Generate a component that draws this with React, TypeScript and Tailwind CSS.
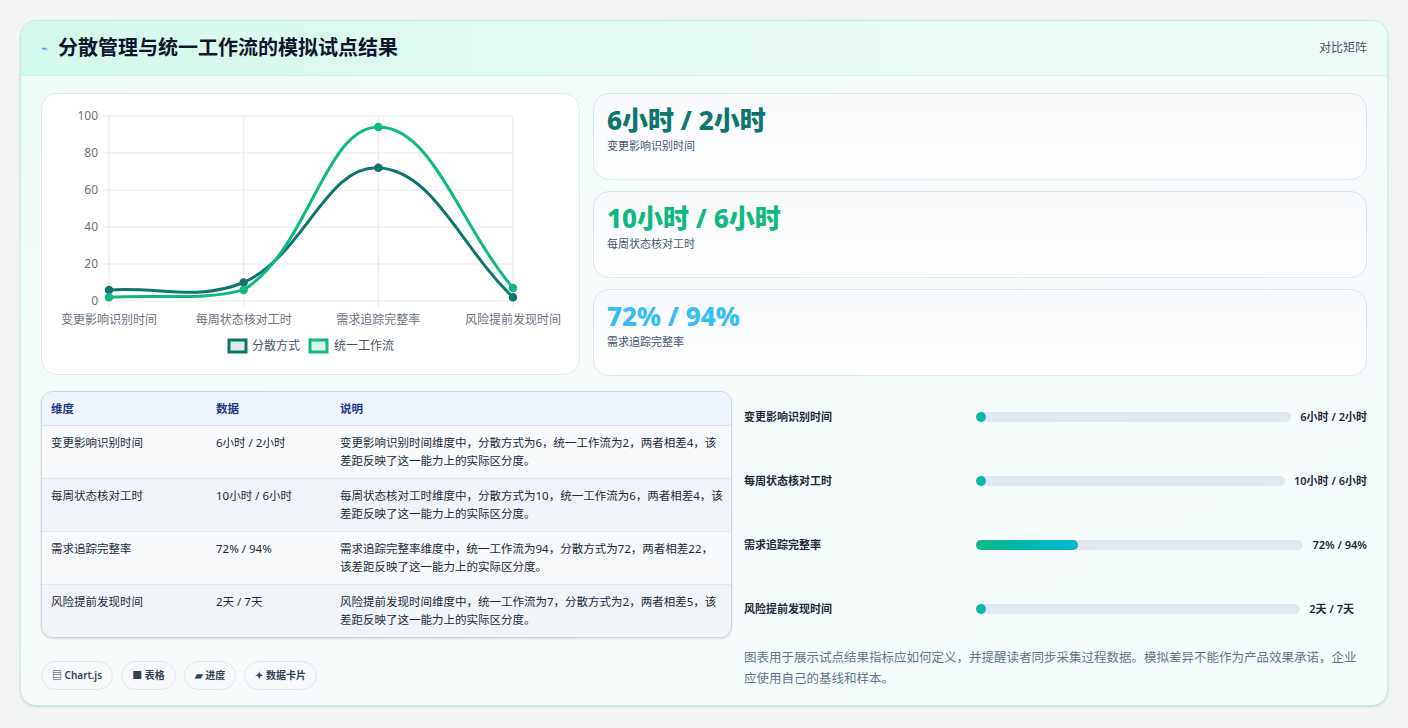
import React from "react";

const cats = ["变更影响识别时间", "每周状态核对工时", "需求追踪完整率", "风险提前发现时间"];
const seriesA = [6, 10, 72, 2];
const seriesB = [2, 6, 94, 7];

const X0 = 67;
const X1 = 471;
const Y0 = 207;
const Y1 = 22;

function pts(vals: number[]) {
  return vals.map((v, i) => ({
    x: X0 + ((X1 - X0) / 3) * i,
    y: Y0 - ((Y0 - Y1) * v) / 100,
  }));
}

// chart.js style spline (tension 0.4)
function curve(vals: number[]) {
  const p = pts(vals);
  const t = 0.4;
  const cps = p.map((cur, i) => {
    const prev = p[i - 1] || cur;
    const next = p[i + 1] || cur;
    const d01 = Math.hypot(cur.x - prev.x, cur.y - prev.y);
    const d12 = Math.hypot(next.x - cur.x, next.y - cur.y);
    const s01 = d01 / (d01 + d12 || 1);
    const s12 = d12 / (d01 + d12 || 1);
    const fa = t * s01;
    const fb = t * s12;
    return {
      prev: { x: cur.x - fa * (next.x - prev.x), y: Math.min(Y0, cur.y - fa * (next.y - prev.y)) },
      next: { x: cur.x + fb * (next.x - prev.x), y: Math.min(Y0, cur.y + fb * (next.y - prev.y)) },
    };
  });
  let d = `M${p[0].x},${p[0].y}`;
  for (let i = 1; i < p.length; i++) {
    d += ` C${cps[i - 1].next.x},${cps[i - 1].next.y} ${cps[i].prev.x},${cps[i].prev.y} ${p[i].x},${p[i].y}`;
  }
  return d;
}

const LineChart: React.FC = () => (
  <svg width="536" height="262" className="block">
    {[0, 20, 40, 60, 80, 100].map((v) => {
      const y = Y0 - ((Y0 - Y1) * v) / 100;
      return (
        <g key={v}>
          <line x1={X0 - 6} x2={X1} y1={y} y2={y} stroke="#e5e7eb" />
          <text x={X0 - 11} y={y + 4} textAnchor="end" fontSize="12" fill="#6b7280">
            {v}
          </text>
        </g>
      );
    })}
    {cats.map((c, i) => {
      const x = X0 + ((X1 - X0) / 3) * i;
      return (
        <g key={c}>
          <line x1={x} x2={x} y1={Y1} y2={Y0 + 6} stroke="#e5e7eb" />
          <text x={x} y={Y0 + 23} textAnchor="middle" fontSize="12" fill="#6b7280">
            {c}
          </text>
        </g>
      );
    })}
    <path d={curve(seriesA)} fill="none" stroke="#0f766e" strokeWidth="3" />
    <path d={curve(seriesB)} fill="none" stroke="#10b981" strokeWidth="3" />
    {pts(seriesA).map((p, i) => (
      <circle key={"a" + i} cx={p.x} cy={p.y} r="3.5" fill="#0f766e" stroke="#0f766e" strokeWidth="1.5" />
    ))}
    {pts(seriesB).map((p, i) => (
      <circle key={"b" + i} cx={p.x} cy={p.y} r="3.5" fill="#10b981" stroke="#10b981" strokeWidth="1.5" />
    ))}
    <rect x="187" y="246" width="17" height="12" fill="#e0ecea" stroke="#0f766e" strokeWidth="3" />
    <text x="210" y="256" fontSize="12" fill="#4b5563">分散方式</text>
    <rect x="268" y="246" width="17" height="12" fill="#d7f5e9" stroke="#10b981" strokeWidth="3" />
    <text x="292" y="256" fontSize="12" fill="#4b5563">统一工作流</text>
  </svg>
);

const cards = [
  { v: "6小时 / 2小时", l: "变更影响识别时间", c: "text-[#0f766e]" },
  { v: "10小时 / 6小时", l: "每周状态核对工时", c: "text-[#10b981]" },
  { v: "72% / 94%", l: "需求追踪完整率", c: "text-[#38bdf8]" },
];

const rows = [
  ["变更影响识别时间", "6小时 / 2小时", "变更影响识别时间维度中，分散方式为6，统一工作流为2，两者相差4，该差距反映了这一能力上的实际区分度。"],
  ["每周状态核对工时", "10小时 / 6小时", "每周状态核对工时维度中，分散方式为10，统一工作流为6，两者相差4，该差距反映了这一能力上的实际区分度。"],
  ["需求追踪完整率", "72% / 94%", "需求追踪完整率维度中，统一工作流为94，分散方式为72，两者相差22，该差距反映了这一能力上的实际区分度。"],
  ["风险提前发现时间", "2天 / 7天", "风险提前发现时间维度中，统一工作流为7，分散方式为2，两者相差5，该差距反映了这一能力上的实际区分度。"],
];

const bars = [
  { l: "变更影响识别时间", v: "6小时 / 2小时", w: 3, pr: "" },
  { l: "每周状态核对工时", v: "10小时 / 6小时", w: 3, pr: "" },
  { l: "需求追踪完整率", v: "72% / 94%", w: 31, pr: "" },
  { l: "风险提前发现时间", v: "2天 / 7天", w: 3, pr: "pr-[13px]" },
];

export default function App() {
  return (
    <div
      className="w-[1408px] h-[728px] bg-[#f3f4f6] p-5 pb-[22px]"
      style={{ fontFamily: '"Noto Sans", "Noto Sans CJK SC", sans-serif' }}
    >
      <div className="h-full rounded-2xl border border-[#bdeedd] bg-gradient-to-br from-[#effcf6] via-[#f8fdfc] to-[#f3fbfb] shadow-sm overflow-hidden flex flex-col">
        <div className="h-[55px] shrink-0 flex items-center justify-between px-5 border-b border-[#d5efe7] bg-gradient-to-r from-[#d3f8ec] via-[#e6fbf3] to-[#effcf7]">
          <div className="flex items-center gap-2.5">
            <span className="text-[11px] text-[#3b82f6]">⌁</span>
            <h1 className="text-[20px] font-bold text-[#0f172a]">分散管理与统一工作流的模拟试点结果</h1>
          </div>
          <span className="text-[12px] text-[#475569]">对比矩阵</span>
        </div>

        <div className="flex-1 px-5 pt-[17px]">
          <div className="flex gap-[13px]">
            <div className="w-[539px] h-[282px] shrink-0 rounded-2xl border border-[#e2e8f0] bg-white">
              <LineChart />
            </div>
            <div className="flex-1 flex flex-col gap-[11px]">
              {cards.map((c) => (
                <div key={c.l} className="h-[87px] rounded-2xl border border-[#dbe6f3] bg-gradient-to-b from-[#f8fafc] to-white px-[13px] pt-[9px]">
                  <div className={`text-[26px] font-extrabold leading-[34px] ${c.c}`}>{c.v}</div>
                  <div className="text-[11px] text-[#475569] mt-px">{c.l}</div>
                </div>
              ))}
            </div>
          </div>

          <div className="flex gap-3 mt-[15px]">
            <div className="w-[691px] shrink-0">
              <div className="rounded-xl border border-[#cbd5e1] overflow-hidden bg-[#f8fafc] shadow-sm">
                <table className="w-full text-[11.5px] text-[#1e293b]">
                  <thead className="bg-[#eef5fe] text-[#1e3a8a]">
                    <tr className="h-[33px] border-b border-[#dbe3ee]">
                      <th className="text-left font-semibold pl-[9px] w-[174px]">维度</th>
                      <th className="text-left font-semibold w-[124px]">数据</th>
                      <th className="text-left font-semibold">说明</th>
                    </tr>
                  </thead>
                  <tbody>
                    {rows.map((r, i) => (
                      <tr key={r[0]} className={`h-[53px] ${i < 3 ? "border-b border-[#e2e8f0]" : ""} ${i % 2 ? "bg-[#f1f5f9]" : "bg-[#f8fafc]"}`}>
                        <td className="pl-[9px] align-top pt-[8px]">{r[0]}</td>
                        <td className="align-top pt-[8px]">{r[1]}</td>
                        <td className="align-top pt-[8px] pr-2 leading-[18px]">{r[2]}</td>
                      </tr>
                    ))}
                  </tbody>
                </table>
              </div>
              <div className="flex gap-2 mt-[23px] text-[10px] text-[#334155] font-semibold">
                <span className="h-[29px] px-[10px] rounded-full border border-[#e2e8f0] bg-[#f8fafc] flex items-center">▤ Chart.js</span>
                <span className="h-[29px] px-[10px] rounded-full border border-[#e2e8f0] bg-[#f8fafc] flex items-center">■ 表格</span>
                <span className="h-[29px] px-[10px] rounded-full border border-[#e2e8f0] bg-[#f8fafc] flex items-center">▰ 进度</span>
                <span className="h-[29px] px-[10px] rounded-full border border-[#e2e8f0] bg-[#f8fafc] flex items-center">✦ 数据卡片</span>
              </div>
            </div>

            <div className="flex-1 flex flex-col -mt-[6px]">
              {bars.map((b) => (
                <div key={b.l} className={`h-[64px] flex items-center text-[11px] font-semibold text-[#1e293b] ${b.pr}`}>
                  <span className="w-[232px] shrink-0">{b.l}</span>
                  <div className="flex-1">
                    <div className="h-[10px] rounded-full bg-[#e2e8f0]">
                      <div
                        className="h-full rounded-full bg-gradient-to-r from-[#10b981] to-[#06b6d4] min-w-[10px]"
                        style={{ width: `${b.w}%` }}
                      />
                    </div>
                  </div>
                  <span className="shrink-0 pl-[9px]">{b.v}</span>
                </div>
              ))}
              <p className="mt-[6px] text-[12.5px] leading-[21px] text-[#64748b]">
                图表用于展示试点结果指标应如何定义，并提醒读者同步采集过程数据。模拟差异不能作为产品效果承诺，企业应使用自己的基线和样本。
              </p>
            </div>
          </div>
        </div>
      </div>
    </div>
  );
}
